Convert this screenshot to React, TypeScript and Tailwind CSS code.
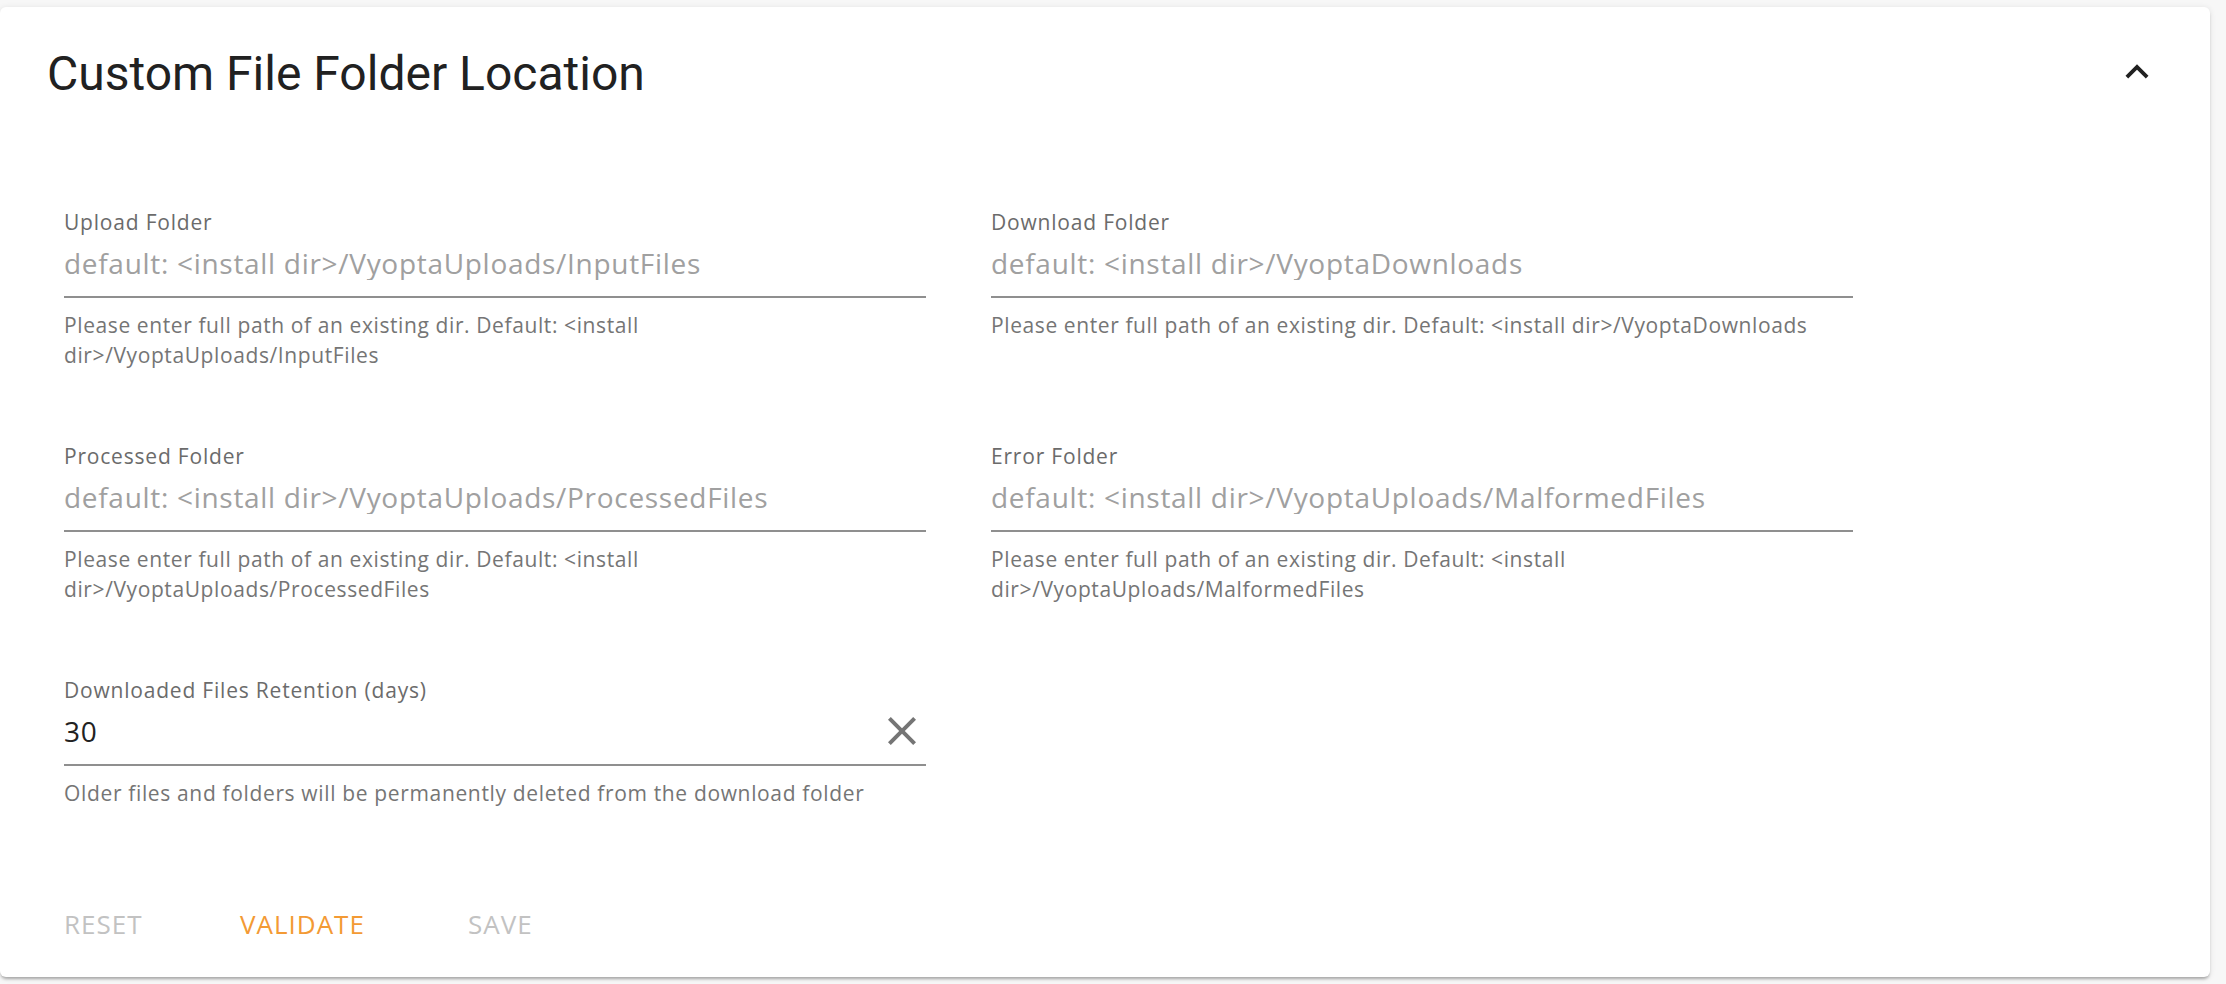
import { useState } from "react";

type Field = {
  label: string;
  placeholder: string;
  helper: string;
};

const folders: Field[] = [
  {
    label: "Upload Folder",
    placeholder: "default: <install dir>/VyoptaUploads/InputFiles",
    helper: "Please enter full path of an existing dir. Default: <install dir>/VyoptaUploads/InputFiles",
  },
  {
    label: "Download Folder",
    placeholder: "default: <install dir>/VyoptaDownloads",
    helper: "Please enter full path of an existing dir. Default: <install dir>/VyoptaDownloads",
  },
  {
    label: "Processed Folder",
    placeholder: "default: <install dir>/VyoptaUploads/ProcessedFiles",
    helper: "Please enter full path of an existing dir. Default: <install dir>/VyoptaUploads/ProcessedFiles",
  },
  {
    label: "Error Folder",
    placeholder: "default: <install dir>/VyoptaUploads/MalformedFiles",
    helper: "Please enter full path of an existing dir. Default: <install dir>/VyoptaUploads/MalformedFiles",
  },
];

function FolderField({ field }: { field: Field }) {
  return (
    <div className="flex flex-col">
      <label className="text-[21px] leading-[28px] tracking-[0.8px] text-[#6b6b6b]">{field.label}</label>
      <div className="mt-[10px] border-b-2 border-[#8f8f8f] pb-[16px]">
        <input
          className="w-full text-[28px] leading-[34px] h-[34px] tracking-[0.7px] outline-none bg-transparent text-[#222] placeholder:text-[#a0a0a0]"
          placeholder={field.placeholder}
        />
      </div>
      <p className="mt-[12px] text-[21px] leading-[30px] tracking-[0.6px] text-[#757575]">{field.helper}</p>
    </div>
  );
}

export default function App() {
  const [days, setDays] = useState("30");

  return (
    <div className="min-h-screen bg-[#f7f7f7] pt-[7px] pr-[16px] pb-[7px] font-['Open_Sans',sans-serif]">
      <div className="bg-white rounded-md shadow-[0_3px_3px_-1px_rgba(0,0,0,0.28),0_1px_6px_rgba(0,0,0,0.1)] h-[970px] flex flex-col">
        <div className="flex items-center justify-between pt-[39px] pl-[47px] pr-[50px]">
          <h1 className="font-['Roboto',sans-serif] text-[48px] leading-[56px] text-[#212121]">
            Custom File Folder Location
          </h1>
          <svg viewBox="0 0 24 24" className="w-[46px] h-[46px] -mt-[5px] fill-[#212121]">
            <path d="M12 8l-6 6 1.41 1.41L12 10.83l4.59 4.58L18 14z" />
          </svg>
        </div>

        <div className="grid grid-cols-[862px_862px] gap-x-[65px] gap-y-[72px] pl-[64px] mt-[106px]">
          {folders.map((f) => (
            <FolderField key={f.label} field={f} />
          ))}
          <div className="flex flex-col">
            <label className="text-[21px] leading-[28px] tracking-[0.8px] text-[#6b6b6b]">
              Downloaded Files Retention (days)
            </label>
            <div className="mt-[10px] border-b-2 border-[#8f8f8f] pb-[16px] flex items-center">
              <input
                className="flex-1 text-[28px] leading-[34px] h-[34px] tracking-[0.7px] outline-none bg-transparent text-[#222]"
                value={days}
                onChange={(e) => setDays(e.target.value)}
              />
              <button onClick={() => setDays("")} className="-my-[7px]">
                <svg viewBox="0 0 24 24" className="w-[48px] h-[48px] fill-[#757575]">
                  <path d="M19 6.41L17.59 5 12 10.59 6.41 5 5 6.41 10.59 12 5 17.59 6.41 19 12 13.41 17.59 19 19 17.59 13.41 12z" />
                </svg>
              </button>
            </div>
            <p className="mt-[12px] text-[21px] leading-[30px] tracking-[0.65px] text-[#757575]">
              Older files and folders will be permanently deleted from the download folder
            </p>
          </div>
        </div>

        <div className="flex pl-[64px] mt-[99px] text-[26px] leading-[34px] tracking-[1px]">
          <button className="w-[176px] text-left text-[#c2c2c2]">RESET</button>
          <button className="w-[228px] text-left text-[#f39a34]">VALIDATE</button>
          <button className="text-left text-[#c2c2c2]">SAVE</button>
        </div>
      </div>
    </div>
  );
}
